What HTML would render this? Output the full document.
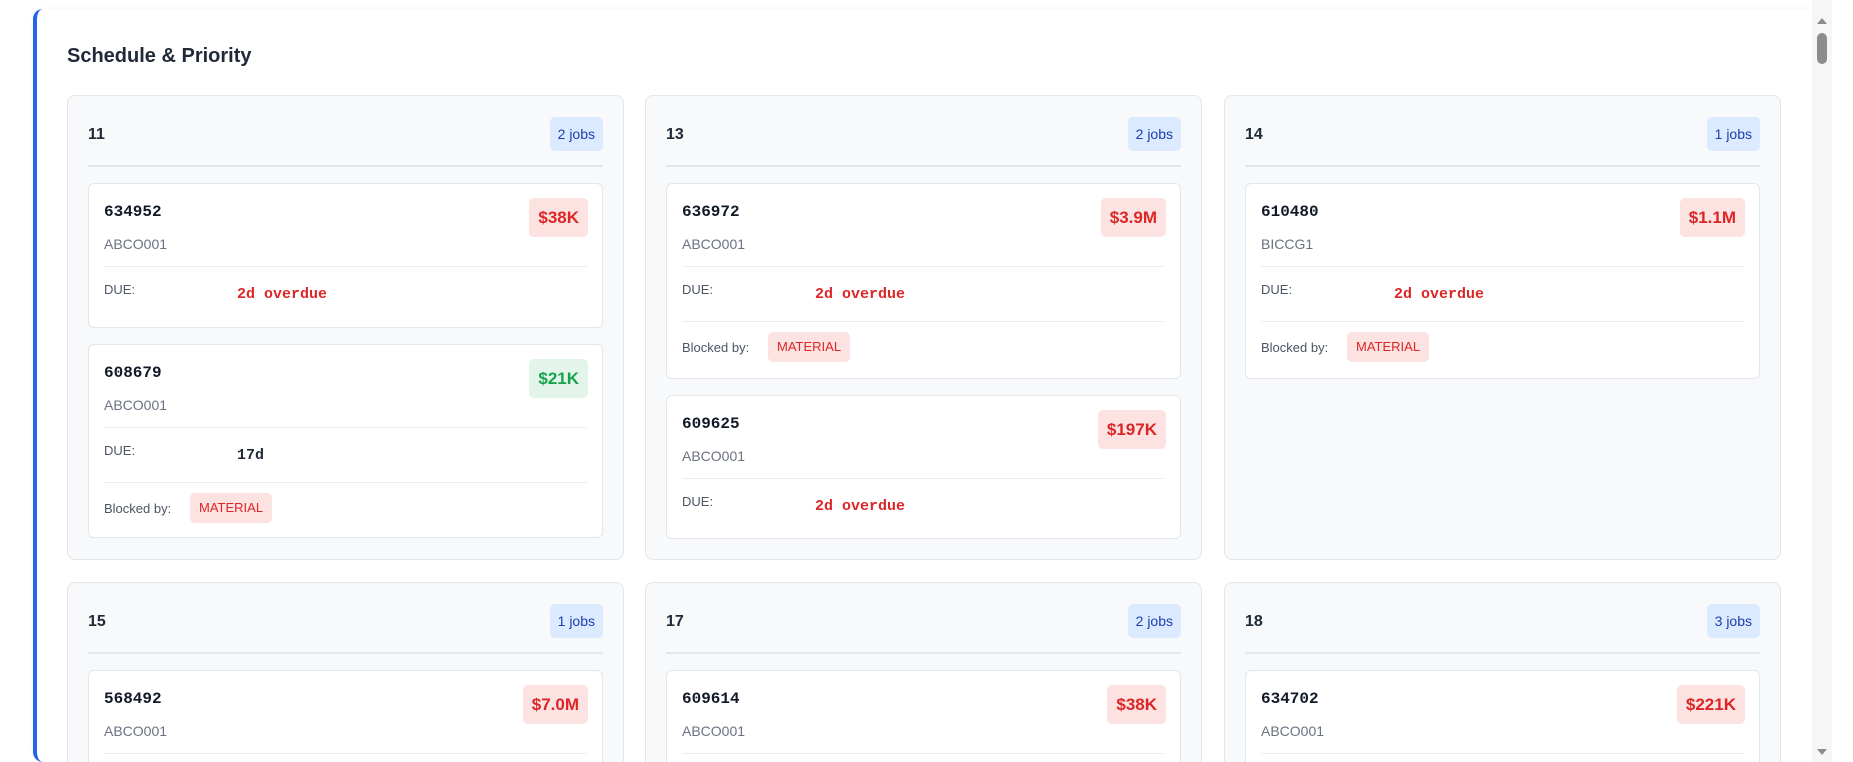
<!DOCTYPE html>
<html><head><meta charset="utf-8">
<style>
*{box-sizing:border-box;margin:0;padding:0}
html,body{width:1853px;height:762px;overflow:hidden;background:#fff;font-family:"Liberation Sans",sans-serif;color:#1f2937}
.clip{position:relative;width:1853px;height:762px;overflow:hidden}
.outer{position:absolute;left:33px;top:9px;width:1779px;height:753px;background:#fff;border-left:4px solid #2563eb;border-radius:10px 0 0 10px;box-shadow:0 0 3px rgba(0,0,0,.06)}
.title{position:absolute;left:67px;top:45px;font-size:20px;font-weight:600;color:#1f2937}
.panel{position:absolute;width:557px;background:#f8f9fb;border:1px solid #e3e6ea;border-radius:8px}
.num{position:absolute;left:20px;top:29px;font-size:16px;font-weight:600;line-height:20px}
.jb{position:absolute;right:20px;top:21px;height:34px;line-height:34px;padding:0 8px;background:#dbeafe;color:#1e40af;border-radius:5px;font-size:14px}
.hd{position:absolute;left:20px;right:20px;top:69px;height:2px;background:#e3e6ea}
.card{position:absolute;left:20px;right:20px;background:#fff;border:1px solid #e3e6ea;border-radius:6px}
.id{position:absolute;left:15px;top:17px;font-family:"Liberation Mono",monospace;font-weight:bold;font-size:16px;line-height:22px;color:#111827}
.cu{position:absolute;left:15px;top:51px;font-size:14px;color:#6b7280;line-height:18px}
.amt{position:absolute;right:14px;top:14px;height:39px;line-height:39px;padding:0 9px;border-radius:5px;font-size:17px;font-weight:bold}
.r{background:#fde2e2;color:#dc2626}.g{background:#e3f5ea;color:#16a34a}
.dv{position:absolute;left:15px;right:15px;height:1px;background:#eceef1}
.lb{position:absolute;left:15px;font-size:13px;color:#4b5563;line-height:18px}
.dv1{top:82px}.dv2{top:137px}
.due{top:97px}
.val{position:absolute;left:148px;top:101px;font-family:"Liberation Mono",monospace;font-weight:bold;font-size:15px;line-height:20px}
.red{color:#dc2626}
.bl{top:155px}
.mat{position:absolute;left:101px;top:148px;height:30px;line-height:30px;padding:0 9px;background:#fde2e2;color:#dc2626;border-radius:5px;font-size:13px}
.sb{position:absolute;left:1812px;top:0;width:20px;height:762px;background:#f6f6f6}
.thumb{position:absolute;left:1817px;top:33px;width:10px;height:31px;background:#8c8c8c;border-radius:5px}
</style></head><body><div class="clip">
<div class="outer"></div>
<div class="title">Schedule &amp; Priority</div>

<div class="panel" style="left:67px;top:95px;height:465px">
<div class="num">11</div><div class="jb">2 jobs</div><div class="hd"></div>
<div class="card" style="top:87px;height:145px">
<div class="id">634952</div><div class="cu">ABCO001</div><div class="amt r">$38K</div>
<div class="dv dv1"></div><div class="lb due">DUE:</div><div class="val red">2d overdue</div></div>
<div class="card" style="top:248px;height:194px">
<div class="id">608679</div><div class="cu">ABCO001</div><div class="amt g">$21K</div>
<div class="dv dv1"></div><div class="lb due">DUE:</div><div class="val">17d</div>
<div class="dv dv2"></div><div class="lb bl">Blocked by:</div><div class="mat">MATERIAL</div></div>
</div>

<div class="panel" style="left:645px;top:95px;height:465px">
<div class="num">13</div><div class="jb">2 jobs</div><div class="hd"></div>
<div class="card" style="top:87px;height:196px">
<div class="id">636972</div><div class="cu">ABCO001</div><div class="amt r">$3.9M</div>
<div class="dv dv1"></div><div class="lb due">DUE:</div><div class="val red">2d overdue</div>
<div class="dv dv2"></div><div class="lb bl">Blocked by:</div><div class="mat">MATERIAL</div></div>
<div class="card" style="top:299px;height:144px">
<div class="id">609625</div><div class="cu">ABCO001</div><div class="amt r">$197K</div>
<div class="dv dv1"></div><div class="lb due">DUE:</div><div class="val red">2d overdue</div></div>
</div>

<div class="panel" style="left:1224px;top:95px;height:465px">
<div class="num">14</div><div class="jb">1 jobs</div><div class="hd"></div>
<div class="card" style="top:87px;height:196px">
<div class="id">610480</div><div class="cu">BICCG1</div><div class="amt r">$1.1M</div>
<div class="dv dv1"></div><div class="lb due">DUE:</div><div class="val red">2d overdue</div>
<div class="dv dv2"></div><div class="lb bl">Blocked by:</div><div class="mat">MATERIAL</div></div>
</div>

<div class="panel" style="left:67px;top:582px;height:300px">
<div class="num">15</div><div class="jb">1 jobs</div><div class="hd"></div>
<div class="card" style="top:87px;height:145px">
<div class="id">568492</div><div class="cu">ABCO001</div><div class="amt r">$7.0M</div>
<div class="dv dv1"></div></div>
</div>
<div class="panel" style="left:645px;top:582px;height:300px">
<div class="num">17</div><div class="jb">2 jobs</div><div class="hd"></div>
<div class="card" style="top:87px;height:145px">
<div class="id">609614</div><div class="cu">ABCO001</div><div class="amt r">$38K</div>
<div class="dv dv1"></div></div>
</div>
<div class="panel" style="left:1224px;top:582px;height:300px">
<div class="num">18</div><div class="jb">3 jobs</div><div class="hd"></div>
<div class="card" style="top:87px;height:145px">
<div class="id">634702</div><div class="cu">ABCO001</div><div class="amt r">$221K</div>
<div class="dv dv1"></div></div>
</div>

<div class="sb"></div>
<div class="thumb"></div>
<svg style="position:absolute;left:1815px;top:15px" width="14" height="10"><path d="M2 9 L7 3 L12 9Z" fill="#8c8c8c"/></svg>
<svg style="position:absolute;left:1815px;top:747px" width="14" height="10"><path d="M2 2 L7 8 L12 2Z" fill="#8c8c8c"/></svg>
</div></body></html>
